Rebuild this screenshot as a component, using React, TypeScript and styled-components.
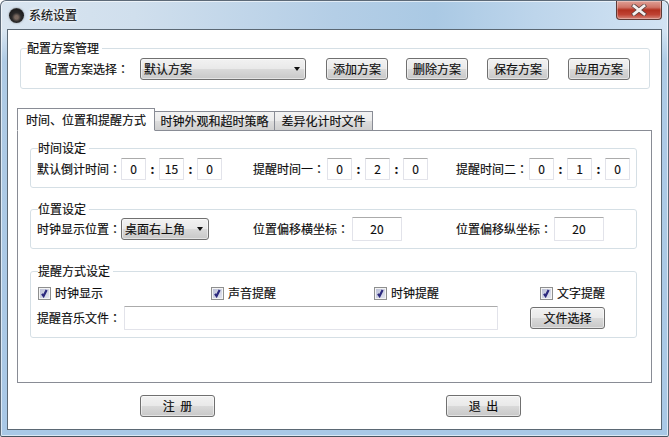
import React from "react";
import styled, { createGlobalStyle } from "styled-components";

const Global = createGlobalStyle`
  html, body { margin: 0; padding: 0; background: #fff; }
  * { box-sizing: border-box; }
  body {
    font: 12px/16px "Noto Sans CJK SC", "Liberation Sans", sans-serif;
    color: #0c0c0c;
    white-space: nowrap;
    -webkit-text-stroke: 0.15px #0c0c0c;
  }
`;

const Win = styled.div`
  width: 669px;
  height: 437px;
  display: flex;
  flex-direction: column;
  overflow: hidden;
  border: 1px solid #5d6a78;
  border-bottom-color: #47535f;
  border-radius: 6px 6px 2px 2px;
  background:
    linear-gradient(180deg, rgba(255,255,255,0) 0 30px, rgba(170,200,228,.9) 60px, #a9c8e6 100%),
    linear-gradient(90deg, #d9e5f0 0%, #d0dfed 20%, #b4cee6 50%, #aac9e4 65%, #bdd5eb 80%, #d2e3f3 100%);
  box-shadow: inset 0 0 0 1px rgba(255,255,255,.6);
`;
const TitleBar = styled.div`
  height: 28px;
  flex: none;
  display: flex;
  align-items: flex-start;
  padding-left: 8px;
`;
const Sphere = styled.div`
  width: 15px;
  height: 15px;
  margin-top: 7px;
  border-radius: 50%;
  background: radial-gradient(circle at 50% 62%, #7a6a60 0 14%, #2b2a2a 38%, #1d1d1d 66%, #8a8a8a 100%);
  box-shadow: 0 0 2px rgba(60,60,60,.6);
`;
const Title = styled.div`
  margin: 6px 0 0 5px;
  color: #111;
  text-shadow: 0 0 4px #fff, 0 0 4px #fff;
`;
const Close = styled.div`
  margin-left: auto;
  margin-right: 6px;
  width: 46px;
  height: 19px;
  display: flex;
  align-items: center;
  justify-content: center;
  border: 1px solid #5e3a36;
  border-top: none;
  border-radius: 0 0 4px 4px;
  background: linear-gradient(180deg, #dfa096 0%, #cf7467 35%, #b2301f 50%, #bf4233 75%, #d68679 100%);
  box-shadow: inset 0 0 0 1px rgba(255,255,255,.3);
`;
const Client = styled.div`
  flex: 1;
  margin: 0 6px 6px 6px;
  border: 1px solid #5b6874;
  background: #fff;
  padding: 18px 9px 0;
`;
const Group = styled.div<{ $mb?: number }>`
  border: 1px solid #d5dfe5;
  border-radius: 3px;
  padding: 0 6px 7px;
  margin-bottom: ${(p) => p.$mb ?? 0}px;
`;
const Legend = styled.div<{ $ml?: number }>`
  width: fit-content;
  height: 16px;
  margin: -9px 0 0 ${(p) => p.$ml ?? 1}px;
  padding: 0 3px 0 0;
  background: #fff;
`;
const SchemeGroup = styled(Group)`
  margin: 0 2px 19px 3px;
  padding-bottom: 8px;
`;
const SchemeRow = styled.div`
  display: flex;
  align-items: center;
  height: 22px;
  margin-top: 2px;
  padding-left: 18px;
`;
const SchemeLabel = styled.span`
  width: 95px;
  flex: none;
`;
const Colon = styled.span`
  font-family: "Noto Sans CJK TC", sans-serif;
`;
const SelectBox = styled.div<{ $w: number }>`
  width: ${(p) => p.$w}px;
  height: 22px;
  flex: none;
  display: flex;
  align-items: center;
  justify-content: space-between;
  padding: 0 5px 0 3px;
  border: 1px solid #707070;
  border-radius: 3px;
  background: linear-gradient(180deg, #f2f2f2 0%, #e9e9e9 48%, #d9d9d9 52%, #c8c8c8 100%);
  box-shadow: inset 0 0 0 1px rgba(255,255,255,.5);
`;
const Arrow = styled.i`
  width: 0;
  height: 0;
  border: 3px solid transparent;
  border-top: 4px solid #111;
  border-bottom: 0;
`;
const Btn = styled.div<{ $w?: number; $ml?: number }>`
  width: ${(p) => p.$w ?? 62}px;
  height: 22px;
  flex: none;
  margin-left: ${(p) => p.$ml ?? 0}px;
  display: flex;
  align-items: center;
  justify-content: center;
  white-space: pre;
  border: 1px solid #707070;
  border-radius: 3px;
  background: linear-gradient(180deg, #f2f2f2 0%, #e9e9e9 48%, #d9d9d9 52%, #c8c8c8 100%);
  box-shadow: inset 0 0 0 1px rgba(255,255,255,.5);
`;
const TabBar = styled.div`
  display: flex;
  align-items: flex-end;
  height: 23px;
  margin-bottom: -1px;
`;
const Tab = styled.div<{ $w: number; $active?: boolean }>`
  position: relative;
  z-index: ${(p) => (p.$active ? 2 : 0)};
  width: ${(p) => p.$w}px;
  height: ${(p) => (p.$active ? 23 : 20)}px;
  display: flex;
  align-items: center;
  justify-content: center;
  border: 1px solid #898c95;
  border-left-width: ${(p) => (p.$active ? 1 : 0)}px;
  border-bottom-color: ${(p) => (p.$active ? "#fff" : "#898c95")};
  background: ${(p) => (p.$active ? "#fff" : "linear-gradient(180deg, #f3f3f3 0%, #ebebeb 48%, #dddddd 52%, #cfcfcf 100%)")};
`;
const Pane = styled.div`
  position: relative;
  height: 253px;
  border: 1px solid #898c95;
  background: #fff;
  padding: 17px 14px 0 12px;
`;
const Row = styled.div<{ $h?: number; $mt?: number }>`
  display: grid;
  grid-template-columns: 216px 203px 1fr;
  align-items: center;
  height: ${(p) => p.$h ?? 22}px;
  margin-top: ${(p) => p.$mt ?? 2}px;
`;
const Field = styled.div`
  display: flex;
  align-items: center;
`;
const FieldLabel = styled.span<{ $w: number }>`
  width: ${(p) => p.$w}px;
  flex: none;
`;
const Num = styled.div<{ $w?: number; $h?: number }>`
  width: ${(p) => p.$w ?? 25}px;
  height: ${(p) => p.$h ?? 22}px;
  flex: none;
  display: flex;
  align-items: center;
  justify-content: center;
  border: 1px solid #e2e3ea;
  border-top-color: #ababab;
  border-radius: 1px;
  background: #fff;
`;
const Sep = styled.span`
  width: 13px;
  text-align: center;
  flex: none;
  font-weight: 700;
`;
const CheckRow = styled.div`
  display: grid;
  grid-template-columns: 173px 163px 166px 1fr;
  height: 13px;
  margin-top: 6px;
  padding-left: 1px;
`;
const CheckItem = styled.div`
  display: flex;
  align-items: center;
  gap: 4px;
`;
const Box = styled.div`
  width: 13px;
  height: 13px;
  flex: none;
  border: 1px solid #8e8f8f;
  background: linear-gradient(135deg, #b9bdd4 0%, #e6e8f2 100%);
  box-shadow: inset 0 0 0 1px #f4f4f4;
  display: flex;
  align-items: center;
  justify-content: center;
`;
const FileRow = styled.div`
  display: flex;
  align-items: center;
  height: 24px;
  margin-top: 8px;
`;
const FileLabel = styled.span`
  width: 87px;
  flex: none;
`;
const PathInput = styled.div`
  width: 374px;
  height: 24px;
  flex: none;
  border: 1px solid #e2e3ea;
  border-top-color: #ababab;
  border-radius: 1px;
  background: #fff;
`;
const Footer = styled.div`
  display: flex;
  gap: 231px;
  margin-top: 12px;
  padding-left: 123px;
`;

const Check = () => (
  <Box>
    <svg width="9" height="9" viewBox="0 0 9 9">
      <path d="M2 4.8 L3.6 7 L6.6 1" fill="none" stroke="#2d2a7e" strokeWidth="2.2" />
    </svg>
  </Box>
);
const Time = ({ label, w, vals }: { label: string; w: number; vals: string[] }) => (
  <Field>
    <FieldLabel $w={w}>{label}<Colon>：</Colon></FieldLabel>
    <Num>{vals[0]}</Num>
    <Sep>:</Sep>
    <Num>{vals[1]}</Num>
    <Sep>:</Sep>
    <Num>{vals[2]}</Num>
  </Field>
);

export default function App() {
  return (
    <Win>
      <Global />
      <TitleBar>
        <Sphere />
        <Title>系统设置</Title>
        <Close>
          <svg width="16" height="12" viewBox="0 0 16 12">
            <path d="M3 2 L13 10 M13 2 L3 10" stroke="#5a4240" strokeWidth="4.2" strokeLinecap="square" />
            <path d="M3 2 L13 10 M13 2 L3 10" stroke="#f4f1f0" strokeWidth="2.8" strokeLinecap="square" />
          </svg>
        </Close>
      </TitleBar>
      <Client>
        <SchemeGroup>
          <Legend $ml={0}>配置方案管理</Legend>
          <SchemeRow>
            <SchemeLabel>配置方案选择<Colon>：</Colon></SchemeLabel>
            <SelectBox $w={166}>默认方案<Arrow /></SelectBox>
            <Btn $ml={20}>添加方案</Btn>
            <Btn $ml={18}>删除方案</Btn>
            <Btn $ml={19}>保存方案</Btn>
            <Btn $ml={19}>应用方案</Btn>
          </SchemeRow>
        </SchemeGroup>
        <TabBar>
          <Tab $w={138} $active>时间、位置和提醒方式</Tab>
          <Tab $w={120}>时钟外观和超时策略</Tab>
          <Tab $w={98}>差异化计时文件</Tab>
        </TabBar>
        <Pane>
          <Group $mb={21}>
            <Legend>时间设定</Legend>
            <Row>
              <Time label="默认倒计时间" w={84} vals={["0", "15", "0"]} />
              <Time label="提醒时间一" w={74} vals={["0", "2", "0"]} />
              <Time label="提醒时间二" w={73} vals={["0", "1", "0"]} />
            </Row>
          </Group>
          <Group $mb={22}>
            <Legend>位置设定</Legend>
            <Row $h={24} $mt={0}>
              <Field>
                <FieldLabel $w={84}>时钟显示位置<Colon>：</Colon></FieldLabel>
                <SelectBox $w={88}>桌面右上角<Arrow /></SelectBox>
              </Field>
              <Field>
                <FieldLabel $w={99}>位置偏移横坐标<Colon>：</Colon></FieldLabel>
                <Num $w={50} $h={24}>20</Num>
              </Field>
              <Field>
                <FieldLabel $w={98}>位置偏移纵坐标<Colon>：</Colon></FieldLabel>
                <Num $w={50} $h={24}>20</Num>
              </Field>
            </Row>
          </Group>
          <Group>
            <Legend>提醒方式设定</Legend>
            <CheckRow>
              <CheckItem><Check />时钟显示</CheckItem>
              <CheckItem><Check />声音提醒</CheckItem>
              <CheckItem><Check />时钟提醒</CheckItem>
              <CheckItem><Check />文字提醒</CheckItem>
            </CheckRow>
            <FileRow>
              <FileLabel>提醒音乐文件<Colon>：</Colon></FileLabel>
              <PathInput />
              <Btn $w={75} $ml={32}>文件选择</Btn>
            </FileRow>
          </Group>
        </Pane>
        <Footer>
          <Btn $w={75}>{"注  册"}</Btn>
          <Btn $w={75}>{"退  出"}</Btn>
        </Footer>
      </Client>
    </Win>
  );
}
